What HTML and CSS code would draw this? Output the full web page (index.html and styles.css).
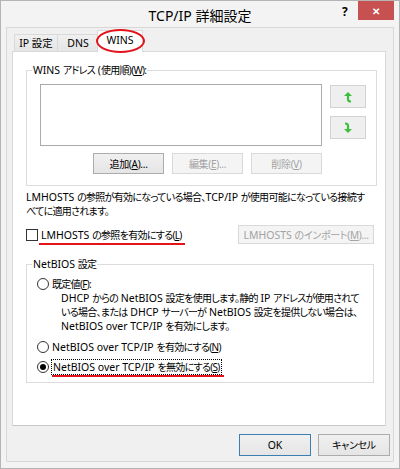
FILE: index.html
```html
<!DOCTYPE html>
<html lang="ja">
<head>
    <meta charset="UTF-8">
    <title>TCP/IP 詳細設定</title>
    <link rel="stylesheet" href="styles.css">
</head>
<body>
    <div class="window">
        <!-- タイトルバー -->
        <div class="titlebar">
            <span></span>
            <span class="title">TCP/IP 詳細設定</span>
            <div class="controls">
                <span class="help">?</span>
                <span class="close">✕</span>
            </div>
        </div>

        <div class="client">
            <div class="tabs">
                <span class="tab ip">IP 設定</span>
                <span class="tab dns">DNS</span>
                <span class="tab active">WINS</span>
            </div>

            <div class="panel">
                <fieldset class="group wins">
                    <legend><span class="en">WINS </span>アドレス<span class="en"> (</span>使用順)(<u>W</u>):</legend>
                    <div class="list-row">
                        <div class="listbox"></div>
                        <div class="arrows">
                            <button class="arrow">
                                <svg width="10" height="12" viewBox="0 0 10 12">
                                    <path d="M5 4 V8.5 Q5 10.5 8 10.5" fill="none" stroke="#3fbf3f" stroke-width="2.2"/>
                                    <path d="M1 5 L5 1 L9 5 Z" fill="#3fbf3f"/>
                                </svg>
                            </button>
                            <button class="arrow">
                                <svg width="10" height="12" viewBox="0 0 10 12">
                                    <path d="M2 1.5 Q5 1.5 5 3.5 V8" fill="none" stroke="#3fbf3f" stroke-width="2.2"/>
                                    <path d="M1 7 L5 11 L9 7 Z" fill="#3fbf3f"/>
                                </svg>
                            </button>
                        </div>
                    </div>
                    <div class="btn-row">
                        <button class="btn">追加(<u>A</u>)...</button>
                        <button class="btn" disabled>編集(<u>E</u>)...</button>
                        <button class="btn" disabled>削除(<u>V</u>)</button>
                    </div>
                </fieldset>

                <p class="note"><span class="en">LMHOSTS </span>の参照が有効になっている場合、<span class="en">TCP/IP </span>が使用可能になっている接続す<br>べてに適用されます。</p>

                <div class="lm-row">
                    <label class="check">
                        <span class="box"></span>
                        <span class="mark lm"><span class="en">LMHOSTS </span>の参照を有効にする(<u>L</u>)</span>
                    </label>
                    <button class="btn import" disabled><span class="en">LMHOSTS </span>のインポート(<u>M</u>)...</button>
                </div>

                <fieldset class="group netbios">
                    <legend><span class="en">NetBIOS </span>設定</legend>
                    <label class="radio first">
                        <span class="dot"></span>
                        <span>既定値(<u>F</u>):</span>
                    </label>
                    <p class="desc"><span class="en">DHCP </span>からの<span class="en"> NetBIOS </span>設定を使用します。静的<span class="en"> IP </span>アドレスが使用されて<br>いる場合、または<span class="en"> DHCP </span>サーバーが<span class="en"> NetBIOS </span>設定を提供しない場合は、<br><span class="en">NetBIOS over TCP/IP </span>を有効にします。</p>
                    <label class="radio">
                        <span class="dot"></span>
                        <span><span class="en">NetBIOS over TCP/IP </span>を有効にする(<u>N</u>)</span>
                    </label>
                    <label class="radio">
                        <span class="dot on"></span>
                        <span class="mark focus"><span class="en">NetBIOS over TCP/IP </span>を無効にする(<u>S</u>)</span>
                    </label>
                </fieldset>
            </div>

            <div class="footer">
                <button class="btn main"><span class="en">OK</span></button>
                <button class="btn main">キャンセル</button>
            </div>
        </div>
    </div>
</body>
</html>
```

FILE: styles.css
```css
* {
    box-sizing: border-box;
}

body {
    margin: 0;
    font-family: 'Noto Sans', 'Noto Sans CJK JP', sans-serif;
    font-size: 10px;
    letter-spacing: -0.7px;
    line-height: 14px;
    color: #000;
    font-feature-settings: "palt";
    background: #fff;
}

.en {
    font-size: 10.5px;
    letter-spacing: 0;
}

u { text-decoration: underline; text-underline-offset: 1px; }

.window {
    width: 400px;
    height: 469px;
    background: #f3f3f3;
    border: 1px solid #b4b4b4;
    padding: 0 5px 6px 5px;
    display: flex;
    flex-direction: column;
}

.titlebar {
    height: 26px;
    display: grid;
    grid-template-columns: 1fr auto 1fr;
    align-items: center;
}

.title {
    font-size: 14px;
    letter-spacing: 0;
    margin-top: 3px;
}

.controls {
    align-self: start;
    display: flex;
    justify-content: flex-end;
    align-items: flex-start;
}

.help {
    font-size: 12px;
    font-weight: bold;
    margin: 4px 11px 0 0;
}

.close {
    width: 36px;
    height: 19px;
    background: #c75050;
    color: #fff;
    font-size: 10px;
    font-weight: bold;
    display: flex;
    align-items: center;
    justify-content: center;
}

.client {
    flex: 1;
    background: #f0f0f0;
    border: 1px solid #d7d7d7;
    padding: 2px 5px 5px 5px;
}

/* タブ */
.tabs {
    display: flex;
    align-items: flex-end;
    padding-left: 2px;
    height: 21px;
}

.tab {
    height: 17px;
    border: 1px solid #d9d9d9;
    border-bottom: none;
    background: linear-gradient(#f0f0f0, #e5e5e5);
    line-height: 17px;
    text-align: center;
    font-size: 10.5px;
    letter-spacing: 0;
}

.tab.ip { width: 44px; }
.tab.dns { width: 41px; border-left: none; }

.tab.active {
    position: relative;
    width: 46px;
    height: 22px;
    margin: 0 0 -1px -2px;
    background: #fff;
    line-height: 19px;
    z-index: 1;
}

.tab.active::after {
    content: "";
    position: absolute;
    left: -2px;
    right: -3px;
    top: -2px;
    bottom: -1px;
    border: 2.5px solid #e3121b;
    border-radius: 50%;
}

.panel {
    height: 375px;
    width: 374px;
    background: #fff;
    border: 1px solid #d9d9d9;
    border-bottom-color: #c8c8c8;
    padding: 11px 11px 0 13px;
}

/* グループボックス */
.group {
    margin: 0;
    border: 1px solid #dcdcdc;
    padding: 7px 10px 11px 5px;
}

.group legend {
    padding: 0 1px;
}

.list-row {
    display: flex;
    gap: 8px;
    margin-left: 8px;
}

.listbox {
    width: 282px;
    height: 62px;
    border: 1px solid #ababab;
    background: #fff;
}

.arrows {
    display: flex;
    flex-direction: column;
    gap: 8px;
    padding-top: 1px;
}

.arrow {
    width: 36px;
    height: 23px;
    border: 1px solid #d2d2d2;
    background: #efefef;
    display: flex;
    align-items: center;
    justify-content: center;
    padding: 0;
}

.btn-row {
    display: flex;
    justify-content: flex-end;
    gap: 8px;
    width: 282px;
    margin: 7px 0 0 8px;
}

.btn {
    font: inherit;
    letter-spacing: -0.3px;
    font-feature-settings: "palt";
    width: 71px;
    height: 21px;
    border: 1px solid #acacac;
    background: linear-gradient(#f0f0f0, #e5e5e5);
    color: #000;
    padding: 0;
}

.btn:disabled {
    border-color: #d9d9d9;
    background: #f4f4f4;
    color: #a3a3a3;
}

.note {
    margin: 4px 0 0 0;
    white-space: nowrap;
}

.lm-row {
    display: flex;
    justify-content: space-between;
    align-items: center;
    margin-top: 7px;
    height: 19px;
}

.check, .radio {
    display: flex;
    align-items: center;
    gap: 3px;
}

.box {
    width: 12px;
    height: 12px;
    border: 1px solid #333;
    background: #fff;
}

.mark {
    position: relative;
}

.mark::after {
    content: "";
    position: absolute;
    height: 2px;
    background: #e3121b;
}

.mark.lm::after {
    left: -2px;
    right: -3px;
    bottom: -3px;
}

.btn.import {
    width: 136px;
    height: 19px;
}

.group.netbios {
    margin-top: 13px;
    padding: 6px 10px 8px 5px;
}

.radio {
    margin-left: 5px;
    height: 14px;
}

.radio + .radio { margin-top: 6px; }
.desc + .radio { margin-top: 7px; }

.dot {
    width: 12px;
    height: 12px;
    border: 1px solid #333;
    border-radius: 50%;
    background: #fff;
    display: flex;
    align-items: center;
    justify-content: center;
}

.dot.on::before {
    content: "";
    width: 6px;
    height: 6px;
    border-radius: 50%;
    background: #000;
}

.desc {
    margin: 0 0 0 29px;
    white-space: nowrap;
}

.focus {
    outline: 1px dotted #000;
    outline-offset: 0;
    padding: 0 1px;
}

.mark.focus::after {
    left: 0;
    right: -3px;
    bottom: -3px;
}

.footer {
    display: flex;
    justify-content: flex-end;
    gap: 7px;
    margin-top: 8px;
    margin-right: -2px;
}

.btn.main {
    width: 72px;
    height: 22px;
}

.btn.main:first-child {
    border-color: #3c7fb1;
}
```
